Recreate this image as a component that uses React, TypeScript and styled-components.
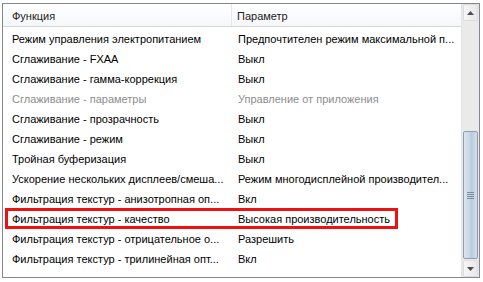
import React from 'react'
import styled, { createGlobalStyle } from 'styled-components'

const GlobalStyle = createGlobalStyle`
    html, body {
        margin: 0;
        padding: 0;
        background: #ffffff;
    }
    body {
        font-family: 'Liberation Sans', Arial, sans-serif;
        font-size: 11px;
    }
`;

const Page = styled.div`
    width: 483px;
    height: 282px;
    padding: 3px 3px 4px 2px;
    box-sizing: border-box;
    background: #ffffff;
`;

const ListBox = styled.div`
    display: flex;
    flex-direction: row;
    height: 100%;
    border: 1px solid #828790;
    box-sizing: border-box;
    background: #ffffff;
    overflow: hidden;
`;

const Content = styled.div`
    display: flex;
    flex-direction: column;
    flex: 1;
    min-width: 0;
`;

const Header = styled.div`
    display: grid;
    grid-template-columns: 229px 1fr;
    height: 23px;
    background: linear-gradient(#ffffff, #f6f7f9);
    border-bottom: 1px solid #d5d5d5;
    box-sizing: border-box;
    flex-shrink: 0;
`;

const HeaderCell = styled.div<{ $first?: boolean }>`
    display: flex;
    align-items: center;
    padding-left: ${p => (p.$first ? '9px' : '5px')};
    padding-top: 2px;
    color: #1b1b1b;
    border-right: ${p => (p.$first ? '1px solid #e3e8ee' : 'none')};
`;

const Rows = styled.div`
    display: flex;
    flex-direction: column;
    padding-top: 2px;
`;

const Row = styled.div`
    position: relative;
    display: grid;
    grid-template-columns: 229px 1fr;
    height: 20px;
    align-items: center;
`;

const Cell = styled.div<{ $first?: boolean; $disabled?: boolean }>`
    padding-left: ${p => (p.$first ? '9px' : '6px')};
    white-space: nowrap;
    overflow: hidden;
    color: ${p => (p.$disabled ? '#8d8d8d' : '#000000')};
`;

// red frame drawn over the selected row
const Marker = styled.div`
    position: absolute;
    left: 2px;
    top: -1px;
    width: 393px;
    height: 21px;
    border: 3px solid #ee1111;
    box-sizing: border-box;
    pointer-events: none;
`;

const ScrollBar = styled.div`
    display: flex;
    flex-direction: column;
    width: 17px;
    background: #eaeaea;
    border-left: 1px solid #e4e4e4;
    flex-shrink: 0;
`;

const ArrowButton = styled.div`
    display: flex;
    align-items: center;
    justify-content: center;
    height: 17px;
    margin: 0 1px;
    border: 1px solid #dcdcdc;
    border-radius: 2px;
    background: linear-gradient(90deg, #f6f6f6, #e9e9e9);
    box-sizing: border-box;
`;

const Track = styled.div`
    display: flex;
    flex-direction: column;
    flex: 1;
    padding-top: 110px;
    padding-bottom: 1px;
`;

const Thumb = styled.div`
    display: flex;
    align-items: center;
    justify-content: center;
    flex: 1;
    margin: 0 1px;
    border: 1px solid #8e9daf;
    border-radius: 2px;
    background: linear-gradient(90deg, #dce6f0 0%, #c5d5e4 45%, #b8cbdc 55%, #d2dfea 100%);
    box-sizing: border-box;
`;

type Item = { name: string; value: string; disabled?: boolean; marked?: boolean }

const items: Item[] = [
    { name: 'Режим управления электропитанием', value: 'Предпочтителен режим максимальной п...' },
    { name: 'Сглаживание - FXAA', value: 'Выкл' },
    { name: 'Сглаживание - гамма-коррекция', value: 'Выкл' },
    { name: 'Сглаживание - параметры', value: 'Управление от приложения', disabled: true },
    { name: 'Сглаживание - прозрачность', value: 'Выкл' },
    { name: 'Сглаживание - режим', value: 'Выкл' },
    { name: 'Тройная буферизация', value: 'Выкл' },
    { name: 'Ускорение нескольких дисплеев/смеша...', value: 'Режим многодисплейной производител...' },
    { name: 'Фильтрация текстур - анизотропная оп...', value: 'Вкл' },
    { name: 'Фильтрация текстур - качество', value: 'Высокая производительность', marked: true },
    { name: 'Фильтрация текстур - отрицательное о...', value: 'Разрешить' },
    { name: 'Фильтрация текстур - трилинейная опт...', value: 'Вкл' },
]

function Arrow({ up }: { up?: boolean }) {
    return (
        <svg width="7" height="4" viewBox="0 0 7 4">
            <path d={up ? 'M3.5 0 L7 4 L0 4 Z' : 'M0 0 L7 0 L3.5 4 Z'} fill="#4d4d4d" />
        </svg>
    )
}

function Grip() {
    return (
        <svg width="7" height="7" viewBox="0 0 7 7">
            <path d="M0 0.5 H7 M0 2.5 H7 M0 4.5 H7 M0 6.5 H7" stroke="#7f8c9a" strokeWidth="1" />
        </svg>
    )
}

function App() {
    return (
        <>
            <GlobalStyle />
            <Page>
                <ListBox>
                    <Content>
                        <Header>
                            <HeaderCell $first>Функция</HeaderCell>
                            <HeaderCell>Параметр</HeaderCell>
                        </Header>
                        <Rows>
                            {items.map(item => (
                                <Row key={item.name}>
                                    <Cell $first $disabled={item.disabled}>{item.name}</Cell>
                                    <Cell $disabled={item.disabled}>{item.value}</Cell>
                                    {item.marked && <Marker />}
                                </Row>
                            ))}
                        </Rows>
                    </Content>
                    <ScrollBar>
                        <ArrowButton><Arrow up /></ArrowButton>
                        <Track>
                            <Thumb><Grip /></Thumb>
                        </Track>
                        <ArrowButton><Arrow /></ArrowButton>
                    </ScrollBar>
                </ListBox>
            </Page>
        </>
    )
}

export default App
